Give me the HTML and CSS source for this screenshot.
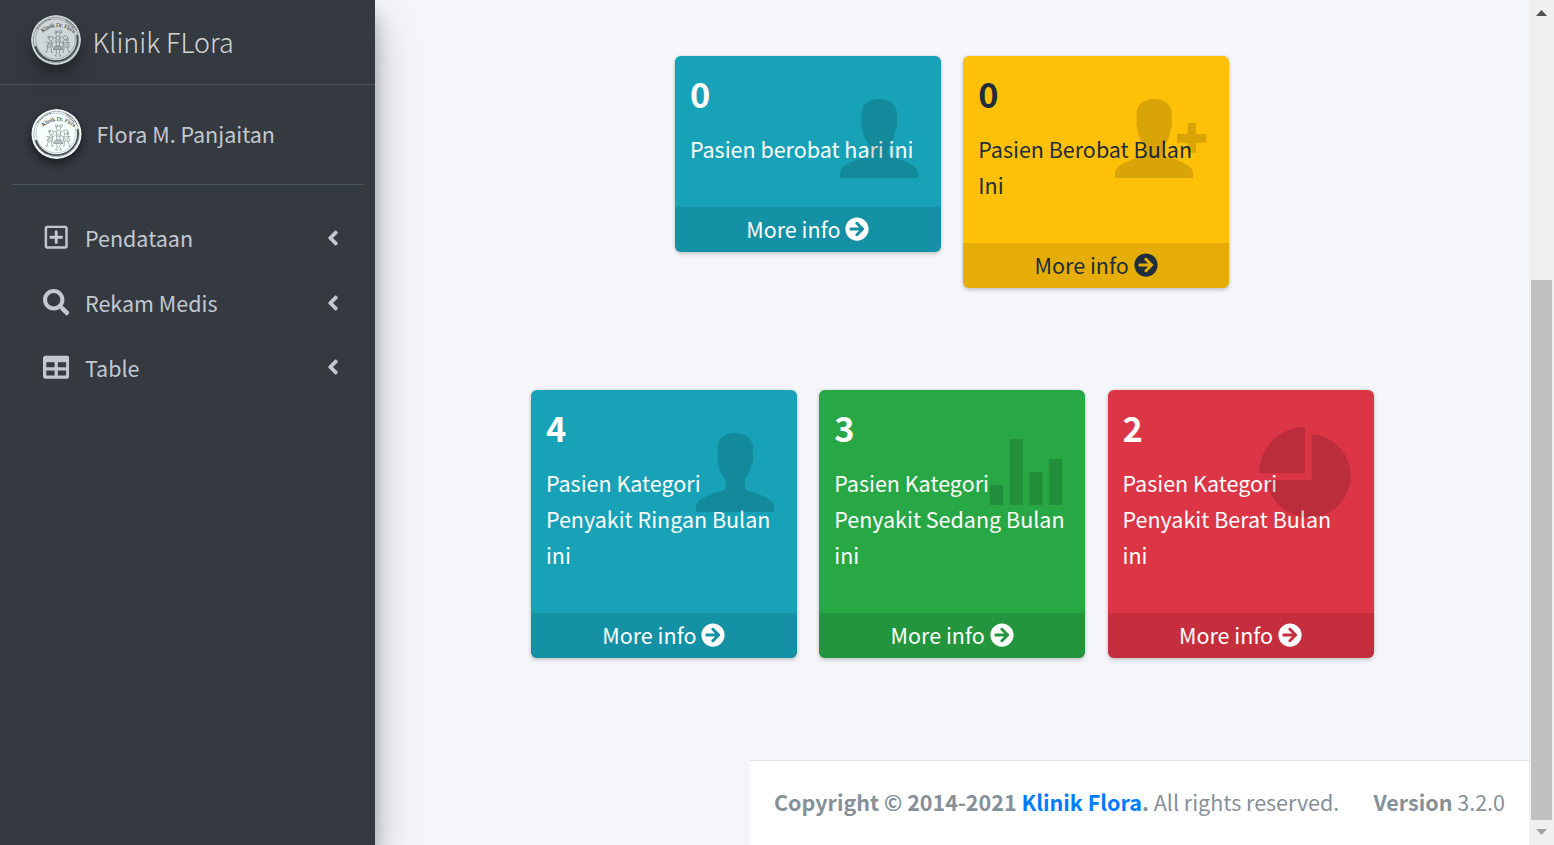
FILE: index.html
```html
<!DOCTYPE html>
<html lang="id">
<head>
<meta charset="utf-8">
<title>Klinik Flora</title>
<link rel="stylesheet" href="styles.css">
</head>
<body>
<svg width="0" height="0" class="defs" aria-hidden="true">
  <defs>
    <symbol id="arrow" viewBox="0 0 512 512"><path d="M256 8c137 0 248 111 248 248S393 504 256 504 8 393 8 256 119 8 256 8zm-28.9 143.6l75.5 72.4H120c-13.3 0-24 10.7-24 24v16c0 13.3 10.7 24 24 24h182.6l-75.5 72.4c-9.7 9.3-9.9 24.8-.4 34.3l11 10.9c9.4 9.4 24.6 9.4 33.9 0L404.3 273c9.4-9.4 9.4-24.6 0-33.9L271.6 106.3c-9.4-9.4-24.6-9.4-33.9 0l-11 10.9c-9.5 9.6-9.3 25.1.4 34.4z"/></symbol>
    <symbol id="angle" viewBox="0 0 256 512"><path d="M31.7 239l136-136c9.4-9.4 24.6-9.4 33.9 0l22.6 22.6c9.4 9.4 9.4 24.6 0 33.9L127.9 256l96.4 96.4c9.4 9.4 9.4 24.6 0 33.9L201.7 409c-9.4 9.4-24.6 9.4-33.9 0l-136-136c-9.5-9.4-9.5-24.6-.1-34z"/></symbol>
    <symbol id="person" viewBox="0 0 78 79"><path d="M39 0C28 0 21.3 6.500 21.300 15.300C21.300 18 22 20 21.900 22C21.200 23 21.100 25 21.300 26.500C21.500 29 22.300 31 22.700 32C23.200 36 24 38 25.500 40.500C26.800 43.500 29 45 29.500 47.500C30 50 30 52 29.800 54C29.600 56 28.500 57 27 57.500C22 59 18 60 13.500 62C8 64.500 4 66.500 2 69C.3 71 0 73 0 75V79H78V75C78 73 77.700 71 76 69C74 66.500 70 64.500 64.500 62C60 60 56 59 51 57.500C49.500 57 49 56 48.800 54C48.600 52 48.600 50 49.100 47.500C49.600 45 51.800 43.500 53 40.500C54 38 54.600 36 55 32C56 31 57 29 57.100 26.500C57.300 25 57 23 56.400 22C56.400 20 57.100 18 57.100 15.300C57.100 6.500 50 0 39 0Z"/></symbol>
    <symbol id="seal" viewBox="0 0 50 50">
      <circle cx="25" cy="25" r="25" fill="#f4fbfb"/>
      <circle cx="25" cy="25" r="22.700" fill="none" stroke="#899192" stroke-width=".6"/>
      <path d="M6 14A22 22 0 0 1 20 4.200M34 4.500A22 22 0 0 1 45.500 15.500M35 6.500A20 20 0 0 1 43 14" fill="none" stroke="#4c5455" stroke-width=".8" stroke-dasharray="3 .6"/>
      <path d="M4.500 31A21.500 21.500 0 0 0 25 46.200A21.500 21.500 0 0 0 46 20" fill="none" stroke="#4b5253" stroke-width="1.800"/>
      <path d="M4 32A22 22 0 0 0 16 45" fill="none" stroke="#4b5253" stroke-width="1.200" stroke-dasharray="1.500 .5"/>
      <circle cx="24.500" cy="24" r="19.900" fill="#f8ffff" stroke="#a6adae" stroke-width=".6"/>
      <path id="seal-arc" d="M11.700 18Q26 5.500 43 18.500" fill="none"/>
      <text class="seal-text"><textPath href="#seal-arc" textLength="34">Klinik Dr. Flora</textPath></text>
      <g fill="none" stroke="#798182" stroke-width=".6">
        <circle cx="27" cy="19" r="2.300"/><circle cx="29.800" cy="16.600" r="1.300"/><circle cx="25" cy="17" r="1.200"/>
        <circle cx="20" cy="23.500" r="2.100"/><circle cx="17.800" cy="22.200" r="1"/><circle cx="34.500" cy="22.800" r="2.100"/><circle cx="36.500" cy="24.500" r="1"/>
        <path d="M25.500 21.500L24.500 27H29.500L28.500 21.500M25.200 27V32M28.500 27V32M22 22.500L25.500 23M28.500 23L32 21.500M25 25H29"/>
        <path d="M19 26L15.500 32H21.500L20.500 26M14.500 27L19 28.500L23 27M17 32L15.500 37M20 32L20.500 37M14 37.200H16M20 37.200H22M16 30H21"/>
        <path d="M33 25L31.500 32H38.500L35.500 25M30 27L33 28L39 27.500M33 32L32.500 37M36 32L38 37M31.500 37.200H33M37.500 37.200H39.500M32 30H37"/>
        <path fill="#b9c0c1" d="M22.300 34.500A4.600 3.800 0 0 1 31.500 34.500Z"/>
        <path d="M25 35L26 38L24 41H26.500M29 35L28 38L30 41H27.500"/>
      </g>
    </symbol>
  </defs>
</svg>

<div class="page">
  <aside class="sidebar">
    <a class="brand">
      <svg class="brand-logo"><use href="#seal"/></svg>
      <span class="brand-name">Klinik FLora</span>
    </a>
    <div class="user">
      <svg class="user-photo"><use href="#seal"/></svg>
      <span class="user-name">Flora M. Panjaitan</span>
    </div>
    <nav class="menu">
      <a class="menu-item">
        <svg class="menu-icon" viewBox="-32 0 512 512"><path d="M352 240v32c0 6.600-5.400 12-12 12h-88v88c0 6.600-5.400 12-12 12h-32c-6.600 0-12-5.400-12-12v-88h-88c-6.600 0-12-5.400-12-12v-32c0-6.600 5.400-12 12-12h88v-88c0-6.600 5.400-12 12-12h32c6.600 0 12 5.400 12 12v88h88c6.600 0 12 5.400 12 12zm96-160v352c0 26.500-21.500 48-48 48H48c-26.500 0-48-21.500-48-48V80c0-26.500 21.500-48 48-48h352c26.500 0 48 21.500 48 48zm-48 346V86c0-3.300-2.700-6-6-6H54c-3.300 0-6 2.700-6 6v340c0 3.300 2.700 6 6 6h340c3.300 0 6-2.700 6-6z"/></svg>
        <span class="menu-label">Pendataan</span>
        <svg class="menu-angle"><use href="#angle"/></svg>
      </a>
      <a class="menu-item">
        <svg class="menu-icon" viewBox="0 0 512 512"><path d="M505 442.700L405.300 343c-4.500-4.500-10.600-7-17-7H372c27.600-35.300 44-79.700 44-128C416 93.100 322.900 0 208 0S0 93.100 0 208s93.100 208 208 208c48.300 0 92.700-16.400 128-44v16.300c0 6.400 2.500 12.500 7 17l99.700 99.700c9.400 9.400 24.600 9.400 33.900 0l28.300-28.300c9.400-9.400 9.400-24.600.1-34zM208 336c-70.700 0-128-57.200-128-128 0-70.700 57.200-128 128-128 70.700 0 128 57.200 128 128 0 70.700-57.200 128-128 128z"/></svg>
        <span class="menu-label">Rekam Medis</span>
        <svg class="menu-angle"><use href="#angle"/></svg>
      </a>
      <a class="menu-item">
        <svg class="menu-icon" viewBox="0 0 512 512"><path d="M464 32H48C21.490 32 0 53.490 0 80v352c0 26.510 21.490 48 48 48h416c26.510 0 48-21.490 48-48V80c0-26.510-21.490-48-48-48zM224 416H64v-96h160v96zm0-160H64v-96h160v96zm224 160H288v-96h160v96zm0-160H288v-96h160v96z"/></svg>
        <span class="menu-label">Table</span>
        <svg class="menu-angle"><use href="#angle"/></svg>
      </a>
    </nav>
  </aside>

  <main class="main">
    <section class="row row-top">
      <article class="box teal">
        <div class="inner"><h3>0</h3><p>Pasien berobat hari ini</p></div>
        <svg class="pic pic-person" viewBox="0 0 78 79"><use href="#person"/></svg>
        <a class="more"><span>More info</span><svg><use href="#arrow"/></svg></a>
      </article>
      <article class="box yellow">
        <div class="inner"><h3>0</h3><p>Pasien Berobat Bulan<br>Ini</p></div>
        <svg class="pic pic-add" viewBox="0 0 92 79"><use href="#person" width="78" height="79"/><path d="M72.700 24H81V35H91.400V43.700H81V53.700H72.700V43.700H62V35H72.700Z"/></svg>
        <a class="more"><span>More info</span><svg><use href="#arrow"/></svg></a>
      </article>
    </section>
    <section class="row row-bottom">
      <article class="box teal">
        <div class="inner"><h3>4</h3><p>Pasien Kategori<br>Penyakit Ringan Bulan<br>ini</p></div>
        <svg class="pic pic-person" viewBox="0 0 78 79"><use href="#person"/></svg>
        <a class="more"><span>More info</span><svg><use href="#arrow"/></svg></a>
      </article>
      <article class="box green">
        <div class="inner"><h3>3</h3><p>Pasien Kategori<br>Penyakit Sedang Bulan<br>ini</p></div>
        <svg class="pic pic-bars" viewBox="0 0 73 66"><path d="M0 46H13V66H0ZM19.700 0H32.700V66H19.700ZM39.400 33H52.400V66H39.400ZM59.100 20H72.100V66H59.100Z"/></svg>
        <a class="more"><span>More info</span><svg><use href="#arrow"/></svg></a>
      </article>
      <article class="box red">
        <div class="inner"><h3>2</h3><p>Pasien Kategori<br>Penyakit Berat Bulan<br>ini</p></div>
        <svg class="pic pic-pie" viewBox="0 0 92 92"><path d="M46 0A46 46 0 0 0 0 46H46ZM52.700 7A42 42 0 1 1 7.900 53H52.700Z"/></svg>
        <a class="more"><span>More info</span><svg><use href="#arrow"/></svg></a>
      </article>
    </section>
    <footer class="footer">
      <span class="copyright"><b>Copyright © 2014-2021 <a>Klinik Flora</a>.</b> All rights reserved.</span>
      <span class="version"><b>Version</b> 3.2.0</span>
    </footer>
  </main>

  <div class="scrollbar">
    <svg class="scroll-up" viewBox="0 0 11 6"><path d="M0 6L5.500 0L11 6Z"/></svg>
    <div class="thumb"></div>
    <svg class="scroll-down" viewBox="0 0 11 6"><path d="M0 0H11L5.500 6Z"/></svg>
  </div>
</div>
</body>
</html>
```
FILE: styles.css
```css
* { box-sizing: border-box; }
body {
  margin: 0;
  overflow: hidden;
  font-family: "Source Sans Pro", "Noto Sans CJK SC", sans-serif;
  font-size: 21.5px;
  line-height: 36px;
  color: #212529;
  background: #f4f6f9;
}
svg { display: block; fill: currentColor; flex: none; }
.defs { position: absolute; }
.page { display: flex; height: 845px; }

.sidebar {
  position: relative;
  z-index: 2;
  flex: none;
  width: 375px;
  background: #343a40;
  color: #c2c7d0;
  box-shadow: 0 21px 42px rgba(0,0,0,.25), 0 15px 15px rgba(0,0,0,.22);
}
.brand {
  display: flex;
  height: 85px;
  padding: 15px 0 0 31px;
  border-bottom: 1px solid #4b545c;
}
.brand-logo {
  width: 50px;
  height: 50px;
  border-radius: 50%;
  opacity: .8;
  box-shadow: 0 15px 30px rgba(0,0,0,.19), 0 9px 9px rgba(0,0,0,.23);
}
.brand-name {
  margin: 9px 0 0 11.600px;
  font-size: 26.86px;
  font-weight: 300;
  color: rgba(255,255,255,.8);
}
.user {
  display: flex;
  height: 100px;
  margin: 0 12px;
  padding: 24px 0 0 19px;
  border-bottom: 1px solid #4f5962;
}
.user-photo {
  width: 51px;
  height: 50px;
  border-radius: 50%;
  box-shadow: 0 4px 9px rgba(0,0,0,.3), 0 5px 9px rgba(0,0,0,.23);
}
.user-name { margin: 7px 0 0 14.500px; }
.seal-text { font: 5.900px "Liberation Serif", serif; fill: #222; }
.menu { padding: 20px 12px 0; }
.menu-item {
  display: flex;
  align-items: center;
  height: 65px;
  padding: 0 24px 0 31px;
}
.menu-icon { width: 26.400px; height: 26.400px; }
.menu-label { flex: 1; margin-left: 15.600px; }
.menu-angle { width: 12px; height: 24px; }
.menu-item:last-child .menu-angle { margin-bottom: 2px; }

.main {
  display: flex;
  flex-direction: column;
  flex: 1;
  min-width: 0;
}
.row {
  display: flex;
  align-items: flex-start;
  gap: 22.330px;
}
.row-top { height: 334px; margin: 56px 0 0 300px; }
.row-bottom { margin-left: 156px; }
.box {
  position: relative;
  width: 266px;
  border-radius: 6px;
  overflow: hidden;
  color: #fff;
  box-shadow: 0 0 1.500px rgba(0,0,0,.125), 0 1.500px 4.500px rgba(0,0,0,.2);
}
.teal { background: #17a2b8; }
.yellow { background: #ffc107; color: #1f2d3d; }
.green { background: #28a745; }
.red { background: #dc3545; }
.inner { padding: 14px 15px 16px 14.900px; }
.inner h3 {
  margin: 0 0 15px;
  font-size: 34.400px;
  font-weight: 700;
  line-height: 46px;
}
.inner p { margin: 0 0 24px; white-space: nowrap; }
.pic { position: absolute; color: rgba(0,0,0,.15); }
.pic-person { width: 78px; height: 79px; right: 23px; top: 43px; }
.pic-add { width: 92px; height: 79px; right: 22px; top: 43px; }
.pic-bars { width: 73px; height: 66px; right: 22px; top: 49px; }
.pic-pie { width: 92px; height: 92px; right: 23px; top: 37px; }
.more {
  display: flex;
  justify-content: center;
  align-items: center;
  gap: 5px;
  height: 45px;
  padding: 0 .3px 1px 0;
  background: rgba(0,0,0,.1);
}
.more svg { width: 24px; height: 24px; }

.footer {
  display: flex;
  justify-content: space-between;
  height: 85px;
  margin: auto 0 0 375px;
  padding: 23px 24px;
  white-space: nowrap;
  color: #869099;
  background: #fff;
  border-top: 1px solid #dee2e6;
}
.footer a { color: #007bff; }

.scrollbar {
  display: flex;
  flex-direction: column;
  align-items: center;
  width: 25px;
  padding: 10px 0 10px;
  background: #f0f0f0;
}
.scroll-up { width: 11px; height: 6px; color: #505050; }
.thumb { width: 21px; height: 540px; margin: 264px 0 9px; background: #c1c1c1; }
.scroll-down { width: 11px; height: 6px; color: #a3a3a3; }
```
